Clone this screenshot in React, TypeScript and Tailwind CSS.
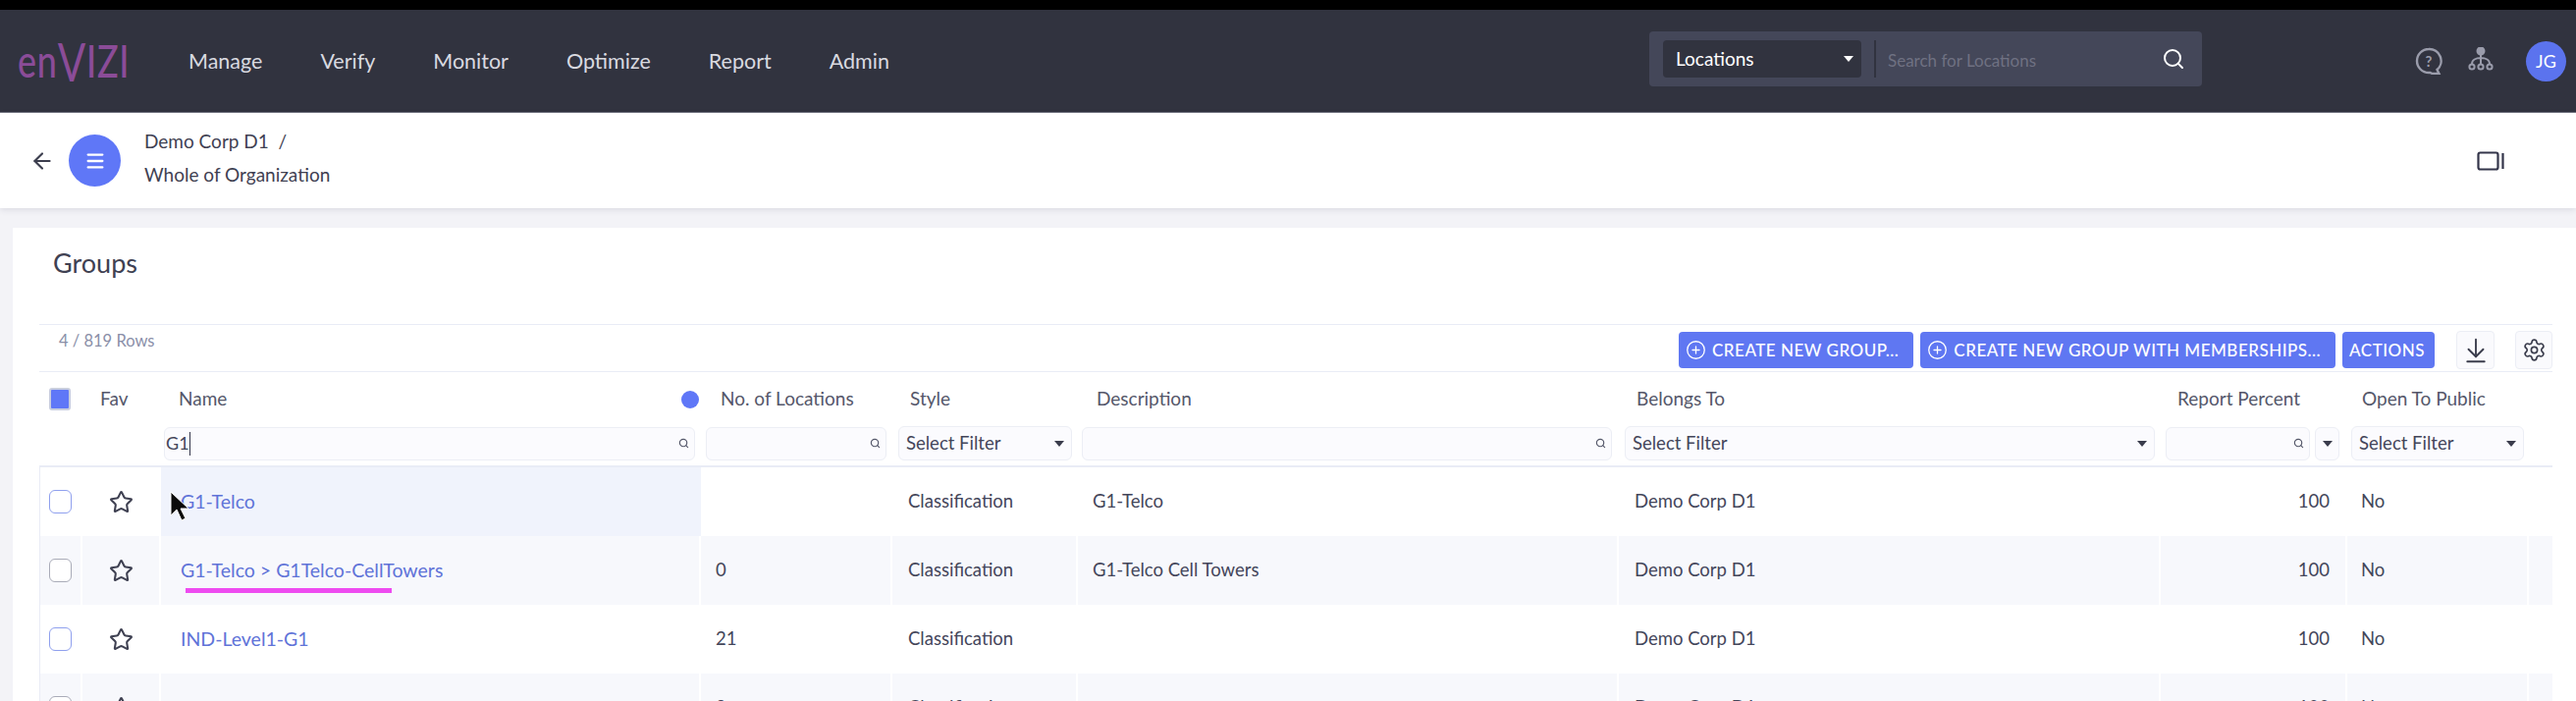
import { ArrowDownToLine, ArrowLeft, CirclePlus, Menu, Search, Settings, Star } from 'lucide-react'

const font = "font-['Lato','Noto_Sans',sans-serif]"
const cols = 'grid grid-cols-[43px_80px_550px_195px_189px_551px_552px_190px_185px_25px]'

const navItems = ['Manage', 'Verify', 'Monitor', 'Optimize', 'Report', 'Admin']

const rows = [
  { name: 'G1-Telco', locations: '', desc: 'G1-Telco' },
  { name: 'G1-Telco > G1Telco-CellTowers', locations: '0', desc: 'G1-Telco Cell Towers' },
  { name: 'IND-Level1-G1', locations: '21', desc: '' },
  { name: 'MTR-G1', locations: '9', desc: '' },
]

function Caret() {
  return <span className="w-0 h-0 border-x-[5px] border-x-transparent border-t-[6px] border-t-[#3a3c4c] shrink-0" />
}

function TextFilter({ value, active }: { value?: string; active?: boolean }) {
  return (
    <div className="flex-1 h-[34px] flex items-center justify-between pl-[1px] pr-[5px] bg-[#fbfbfe] border border-[#eceef5] rounded-md text-[18px] text-[#44465a]">
      <span className="flex items-center">
        {value}
        {active && <span className="w-px h-[24px] bg-[#33354a]" />}
      </span>
      <Search size={11} strokeWidth={2.5} className="text-[#55586a] shrink-0" />
    </div>
  )
}

function SelectFilter() {
  return (
    <div className="flex-1 h-[35px] flex items-center justify-between px-[7px] bg-[#fbfbfe] border border-[#eceef5] rounded-md text-[18.500px] text-[#44465a]">
      Select Filter
      <Caret />
    </div>
  )
}

function PrimaryButton({ label, plus }: { label: string; plus?: boolean }) {
  return (
    <button className={`h-[37px] flex items-center gap-[6px] pl-[7px] bg-[#5f77f2] rounded text-white text-[17px] font-medium tracking-[0.5px] whitespace-nowrap ${plus ? 'pr-[15px]' : 'pr-[10px]'}`}>
      {plus && <CirclePlus size={21} strokeWidth={1.5} />}
      {label}
    </button>
  )
}

function Header() {
  return (
    <header className="shrink-0 h-[105px] flex items-center justify-between bg-[#31333f] border-b border-[#70727e] mt-[10px]">
      <div className="flex items-center">
        <div className="w-[192px] pl-[18px] mb-[4px]">
          <div className="flex items-baseline text-[46px] leading-none tracking-[1px] font-medium text-[#8b4c98] origin-left scale-x-[0.78]">
            <span>en</span>
            <span className="text-[54px] leading-[46px] font-normal translate-y-[4px]">V</span>
            <span>IZI</span>
          </div>
        </div>
        <nav className="flex gap-[59px] text-[21.500px] text-[#d9dae0]">
          {navItems.map((item) => (
            <span key={item}>{item}</span>
          ))}
        </nav>
      </div>
      <div className="flex items-center">
        <div className="w-[563px] h-[56px] flex items-center pl-[14px] pr-[17px] bg-[#444759] rounded-sm mb-[5px] mr-[217px]">
          <div className="w-[202px] h-[38px] flex items-center justify-between pl-[13px] pr-[8px] bg-[#31333f] rounded text-[19px] text-white">
            <span className="mb-[-2px]">Locations</span>
            <span className="w-0 h-0 border-x-[5px] border-x-transparent border-t-[6px] border-t-white" />
          </div>
          <div className="w-[2px] h-[38px] ml-[13px] bg-[#31333f]" />
          <span className="ml-[12px] mt-[4px] flex-1 text-[17px] text-[#6f7182]">Search for Locations</span>
          <Search size={24} strokeWidth={2} className="text-white" />
        </div>
        <svg width="28" height="28" viewBox="0 0 28 28" fill="none" stroke="#9a9cab" strokeWidth="2.4" className="mr-[26px]">
          <path d="M14 2a12 12 0 1 0 0 24h1.5l2 1h7l-2-4a12 12 0 0 0-8.500-21z" />
          <text x="14" y="20" textAnchor="middle" fontSize="15" fontWeight="700" stroke="none" fill="#9a9cab">?</text>
        </svg>
        <svg width="26" height="24" viewBox="0 0 26 24" fill="none" stroke="#9a9cab" strokeWidth="2" className="mr-[33px] mb-[5px]">
          <circle cx="13" cy="4" r="3.500" fill="#9a9cab" />
          <path d="M13 7v10M13 11c-5 0-9 2-9 6M13 11c5 0 9 2 9 6" />
          <circle cx="4" cy="20" r="2.600" />
          <circle cx="13" cy="20" r="2.600" />
          <circle cx="22" cy="20" r="2.600" />
        </svg>
        <div className="w-[41px] h-[41px] mr-[10px] flex items-center justify-center rounded-full bg-[#5b73ee] text-[18px] text-white">JG</div>
      </div>
    </header>
  )
}

function SubHeader() {
  return (
    <div className="relative shrink-0 h-[97px] flex items-center bg-white shadow-[0_2px_6px_rgba(60,60,90,0.12)]">
      <ArrowLeft size={26} strokeWidth={2} className="ml-[30px] text-[#3c3e4e]" />
      <div className="ml-[14px] w-[53px] h-[53px] flex items-center justify-center rounded-full bg-[#5f77f7]">
        <Menu size={22} strokeWidth={2.5} className="text-white" />
      </div>
      <div className="ml-[24px] mb-[6px] flex flex-col gap-[12px] text-[19px] leading-[22px] text-[#3f4152]">
        <span>Demo Corp D1 &nbsp;/</span>
        <span>Whole of Organization</span>
      </div>
      <svg width="28" height="20" viewBox="0 0 28 20" fill="none" stroke="#33354a" strokeWidth="2.2" className="ml-auto mr-[73px]">
        <rect x="1.5" y="1.5" width="20" height="17" rx="2" />
        <path d="M26.5 2v16" />
      </svg>
    </div>
  )
}

function Toolbar() {
  return (
    <div className="h-[49px] flex items-start justify-between border-y border-[#e9ecf6]">
      <span className="pl-[20px] pt-[4px] text-[16.500px] text-[#8a8fa8]">4 / 819 Rows</span>
      <div className="flex items-center pt-[6px]">
        <div className="flex gap-[7px]">
          <PrimaryButton label="CREATE NEW GROUP..." plus />
          <PrimaryButton label="CREATE NEW GROUP WITH MEMBERSHIPS..." plus />
          <PrimaryButton label="ACTIONS" />
        </div>
        <button className="ml-[22px] w-[39px] h-[39px] flex items-center justify-center bg-[#fafafd] border border-[#eceef5] rounded">
          <ArrowDownToLine size={30} strokeWidth={1.5} className="text-[#3a3c4c]" />
        </button>
        <button className="ml-[21px] w-[38px] h-[39px] flex items-center justify-center bg-[#fafafd] border border-[#eceef5] rounded">
          <Settings size={25} strokeWidth={1.6} className="text-[#3a3c4c]" />
        </button>
      </div>
    </div>
  )
}

function TableHead() {
  return (
    <div className={`${cols} h-[97px] grid-rows-[55px_35px] items-center border-b-2 border-[#e9ecf6] text-[19px] text-[#55576a]`}>
      <div className="pl-[10px]">
        <div className="w-[22px] h-[23px] bg-[#5f77f7] rounded-[3px] border-2 border-[#c9cede]" />
      </div>
      <div className="pl-[19px]">Fav</div>
      <div className="pl-[19px] flex items-center justify-between pr-[1px]">
        Name
        <span className="w-[18px] h-[18px] rounded-full bg-[#5f77f7]" />
      </div>
      <div className="pl-[21px]">No. of Locations</div>
      <div className="pl-[19px]">Style</div>
      <div className="pl-[20px]">Description</div>
      <div className="pl-[19px]">Belongs To</div>
      <div className="pl-[18px]">Report Percent</div>
      <div className="pl-[16px]">Open To Public</div>
      <div />

      <div />
      <div />
      <div className="flex pl-[4px] pr-[5px]"><TextFilter value="G1" active /></div>
      <div className="flex pl-[6px] pr-[5px]"><TextFilter /></div>
      <div className="flex pl-[7px] pr-[5px]"><SelectFilter /></div>
      <div className="flex pl-[5px] pr-[6px]"><TextFilter /></div>
      <div className="flex pl-[7px] pr-[5px]"><SelectFilter /></div>
      <div className="flex items-center pl-[6px] pr-[7px] gap-[5px]">
        <TextFilter />
        <div className="w-[25px] h-[34px] flex items-center justify-center bg-[#fbfbfe] border border-[#eceef5] rounded-md"><Caret /></div>
      </div>
      <div className="flex pl-[5px] pr-[4px]"><SelectFilter /></div>
      <div />
    </div>
  )
}

function TableRow({ row, index }: { row: (typeof rows)[number]; index: number }) {
  const striped = index % 2 === 1
  const cell = `flex items-center border-r-2 ${striped ? 'border-white' : 'border-transparent'}`
  return (
    <div className={`${cols} h-[70px] text-[18.500px] text-[#44465a] ${striped ? 'bg-[#f7f8fc]' : 'bg-white'}`}>
      <div className={`${cell} pl-[9px]`}>
        <div className={`w-[23px] h-[24px] rounded-md border ${striped ? 'border-[#a9abb8]' : 'border-[#8fa0ee]'} bg-white`} />
      </div>
      <div className={`${cell} pl-[27px]`}>
        <Star size={25} strokeWidth={2} className="text-[#3f4152]" />
      </div>
      <div className={`${cell} relative pl-[20px] text-[19.500px] text-[#6073d8] ${index === 0 ? 'bg-[#f0f3fc]' : ''}`}>
        {row.name}
        {index === 1 && <span className="absolute left-[25px] top-[53px] w-[210px] h-[5px] bg-[#ee4bf0]" />}
        {index === 0 && (
          <svg width="22" height="32" viewBox="0 0 22 32" className="absolute left-[8px] top-[24px]">
            <path d="M2 1v24l6-6 5 11 4-2-5-10h8z" fill="#0a0a0a" stroke="#fff" strokeWidth="1" />
          </svg>
        )}
      </div>
      <div className={`${cell} pl-[15px]`}>{row.locations}</div>
      <div className={`${cell} pl-[16px]`}>Classification</div>
      <div className={`${cell} pl-[15px]`}>{row.desc}</div>
      <div className={`${cell} pl-[16px]`}>Demo Corp D1</div>
      <div className={`${cell} justify-end pr-[16px]`}>100</div>
      <div className={`${cell} pl-[14px]`}>No</div>
      <div />
    </div>
  )
}

export default function App() {
  return (
    <div className={`${font} h-[714px] overflow-hidden bg-black`}>
      <div className="h-full flex flex-col">
        <Header />
        <SubHeader />
        <main className="flex-1 bg-[#f3f3f7] pt-[20px] pl-[13px]">
          <div className="h-full bg-white pl-[27px] pr-[24px]">
            <h1 className="h-[98px] pl-[14px] pt-[16px] text-[27px] text-[#3f4152]">Groups</h1>
            <Toolbar />
            <TableHead />
            <div className="border-l border-[#e9ecf6]">
              {rows.map((row, i) => (
                <TableRow key={row.name} row={row} index={i} />
              ))}
            </div>
          </div>
        </main>
      </div>
    </div>
  )
}
